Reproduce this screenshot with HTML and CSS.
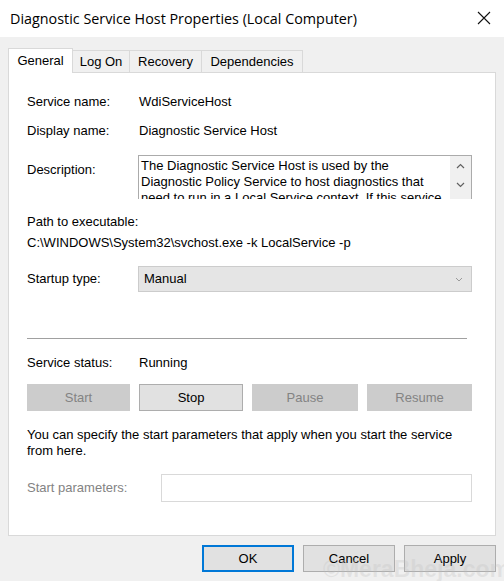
FILE: index.html
```html
<!DOCTYPE html>
<html lang="en">
<head>
    <meta charset="UTF-8">
    <meta name="viewport" content="width=device-width, initial-scale=1.0">
    <title>Diagnostic Service Host Properties (Local Computer)</title>
    <link rel="stylesheet" href="styles.css">
</head>
<body>
    <div class="window">
        <header class="titlebar">
            <span class="title">Diagnostic Service Host Properties (Local Computer)</span>
            <span class="close">
                <svg width="14" height="14" viewBox="0 0 14 14"><path d="M1 1 L13 13 M13 1 L1 13" stroke="#111" stroke-width="1.1" fill="none"/></svg>
            </span>
        </header>

        <nav class="tabs">
            <div class="tab active">General</div>
            <div class="tab tab-logon">Log On</div>
            <div class="tab tab-recovery">Recovery</div>
            <div class="tab tab-deps">Dependencies</div>
        </nav>

        <main class="panel">
            <div class="row first">
                <span class="label">Service name:</span>
                <span>WdiServiceHost</span>
            </div>
            <div class="row">
                <span class="label">Display name:</span>
                <span>Diagnostic Service Host</span>
            </div>
            <div class="row desc-row">
                <span class="label desc-label">Description:</span>
                <div class="desc-box">
                    <div class="desc-text">The Diagnostic Service Host is used by the Diagnostic Policy Service to host diagnostics that need to run in a Local Service context.  If this service is stopped, any diagnostics that depend on it will no longer function.</div>
                    <div class="scrollbar">
                        <svg width="9" height="6" viewBox="0 0 9 6"><path d="M1 5 L4.5 1.5 L8 5" stroke="#606060" stroke-width="1.2" fill="none"/></svg>
                        <svg width="9" height="6" viewBox="0 0 9 6"><path d="M1 1 L4.5 4.5 L8 1" stroke="#606060" stroke-width="1.2" fill="none"/></svg>
                    </div>
                </div>
            </div>

            <div class="path-label">Path to executable:</div>
            <div class="path-value">C:\WINDOWS\System32\svchost.exe -k LocalService -p</div>

            <div class="row startup-row">
                <span class="label">Startup type:</span>
                <div class="combo">
                    <span>Manual</span>
                    <svg width="8" height="5" viewBox="0 0 8 5"><path d="M1 1 L4 4 L7 1" stroke="#9a9a9a" stroke-width="1" fill="none"/></svg>
                </div>
            </div>

            <hr class="separator">

            <div class="row status-row">
                <span class="label">Service status:</span>
                <span>Running</span>
            </div>

            <div class="buttons">
                <button class="btn btn-start" disabled>Start</button>
                <button class="btn btn-stop">Stop</button>
                <button class="btn btn-pause" disabled>Pause</button>
                <button class="btn btn-resume" disabled>Resume</button>
            </div>

            <p class="hint">You can specify the start parameters that apply when you start the service from here.</p>

            <div class="row params-row">
                <span class="label disabled-text">Start parameters:</span>
                <input type="text" class="params-input" disabled>
            </div>
        </main>

        <footer class="dialog-buttons">
            <button class="dbtn default">OK</button>
            <button class="dbtn">Cancel</button>
            <button class="dbtn">Apply</button>
        </footer>

        <div class="watermark">&copy;MeraBheja.com</div>
    </div>
</body>
</html>
```

FILE: styles.css
```css
body {
    margin: 0;
    padding: 0;
    background-color: #f0f0f0;
    font-family: "Liberation Sans", Arial, sans-serif;
    font-size: 13px;
    color: #000;
}

.window {
    position: relative;
    width: 504px;
    height: 581px;
    overflow: hidden;
}

.titlebar {
    height: 37px;
    background-color: #fff;
    display: flex;
    align-items: center;
    justify-content: space-between;
    padding: 0 13px 0 10px;
}

.title {
    font-family: "Open Sans", "Noto Sans", sans-serif;
    font-size: 14.35px;
    color: #000;
    margin-top: -1px;
}

.close {
    display: flex;
    margin-top: -2px;
}

.tabs {
    display: flex;
    align-items: flex-end;
    height: 35px;
    padding-left: 8px;
}

.tab {
    height: 22px;
    line-height: 22px;
    text-align: center;
    box-sizing: border-box;
    border: 1px solid #d9d9d9;
    border-bottom: none;
    border-left: none;
    background-color: #f0f0f0;
}

.tab.active {
    width: 65px;
    height: 25px;
    line-height: 24px;
    background-color: #fff;
    border-left: 1px solid #d9d9d9;
    margin-bottom: -1px;
    position: relative;
    z-index: 1;
}

.tab-logon {
    width: 57px;
}

.tab-recovery {
    width: 72px;
}

.tab-deps {
    width: 101px;
}

.panel {
    margin: 0 8px;
    height: 464px;
    box-sizing: border-box;
    background-color: #fff;
    border: 1px solid #d9d9d9;
    padding: 0 23px 0 18px;
}

.row {
    display: flex;
    align-items: center;
    line-height: 16px;
    margin-top: 13px;
}

.row.first {
    margin-top: 21px;
}

.label {
    width: 112px;
    flex-shrink: 0;
}

.desc-row {
    align-items: flex-start;
    margin-top: 16px;
}

.desc-label {
    margin-top: 7px;
}

.desc-box {
    flex: 1;
    height: 44px;
    box-sizing: border-box;
    border: 1px solid #ababab;
    border-bottom: none;
    display: flex;
    overflow: hidden;
    margin-left: -1px;
}

.desc-text {
    flex: 1;
    padding: 2px 2px 0 2px;
    line-height: 16px;
}

.scrollbar {
    width: 21px;
    background-color: #f0f0f0;
    display: flex;
    flex-direction: column;
    align-items: center;
    padding-top: 7px;
    gap: 13px;
}

.path-label {
    margin-top: 15px;
    line-height: 16px;
}

.path-value {
    margin-top: 5px;
    line-height: 16px;
}

.startup-row {
    margin-top: 15px;
}

.combo {
    flex: 1;
    height: 26px;
    box-sizing: border-box;
    margin-left: -1px;
    background-color: #e5e5e5;
    border: 1px solid #cccccc;
    display: flex;
    align-items: center;
    justify-content: space-between;
    padding: 0 8px 0 5px;
}

.separator {
    border: none;
    border-top: 1px solid #a0a0a0;
    margin: 46px 5px 0 0;
    height: 0;
}

.status-row {
    margin-top: 16px;
}

.buttons {
    display: flex;
    gap: 9px;
    margin-top: 13px;
}

.btn {
    height: 27px;
    font-family: "Liberation Sans", Arial, sans-serif;
    font-size: 13px;
    background-color: #e1e1e1;
    border: 1px solid #adadad;
    color: #000;
    padding: 0;
}

.btn-start {
    width: 103px;
}

.btn-stop {
    width: 104px;
}

.btn-pause {
    width: 106px;
}

.btn-resume {
    width: 105px;
}

.btn:disabled {
    background-color: #cccccc;
    border-color: #cccccc;
    color: #838383;
}

.hint {
    margin: 16px 0 0 0;
    line-height: 16px;
}

.params-row {
    margin-top: 15px;
}

.disabled-text {
    color: #838383;
    width: 134px;
}

.params-input {
    flex: 1;
    height: 28px;
    box-sizing: border-box;
    border: 1px solid #d9d9d9;
    background-color: #fff;
    margin: 0;
}

.dialog-buttons {
    display: flex;
    justify-content: flex-end;
    gap: 9px;
    padding: 9px 8px 0 0;
}

.dbtn {
    width: 92px;
    height: 27px;
    font-family: "Liberation Sans", Arial, sans-serif;
    font-size: 13px;
    background-color: #e1e1e1;
    border: 1px solid #adadad;
    color: #000;
    padding: 0;
}

.dbtn.default {
    border: 1px solid #0078d7;
    box-shadow: inset 0 0 0 1px #0078d7;
}

.watermark {
    position: absolute;
    left: 323px;
    top: 556px;
    font-family: "Liberation Sans", Arial, sans-serif;
    font-weight: bold;
    font-size: 23px;
    color: rgba(190, 190, 190, 0.28);
    white-space: nowrap;
    pointer-events: none;
}
```
